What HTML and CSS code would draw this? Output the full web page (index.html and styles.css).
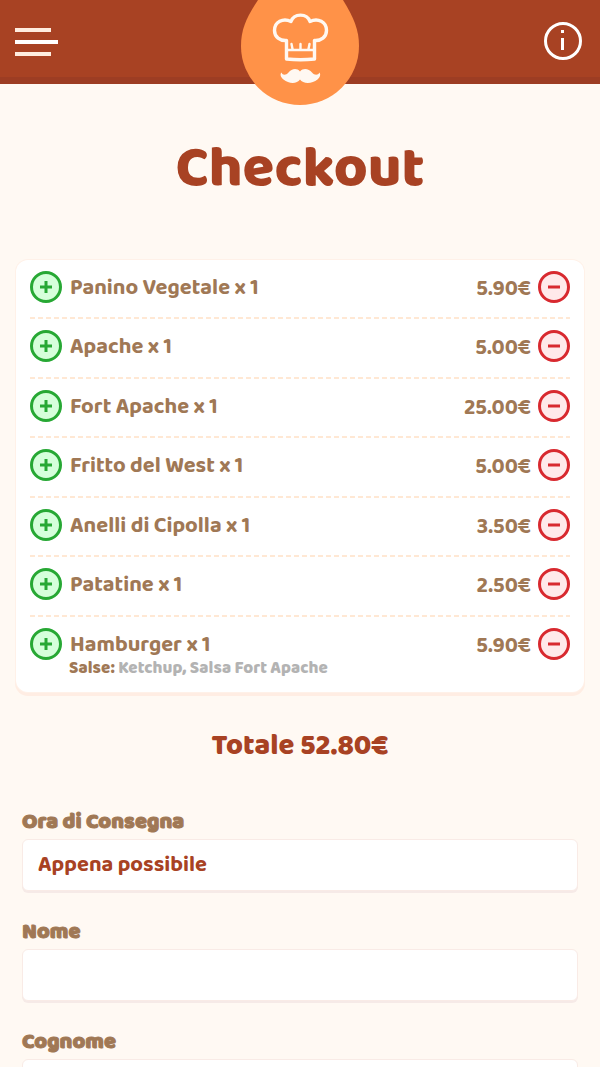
FILE: index.html
```html
<!DOCTYPE html>
<html lang="it">

<head>
	<meta charset="UTF-8">
	<meta name="viewport" content="width=device-width, initial-scale=1">
	<title>Checkout</title>
	<link rel="stylesheet" href="styles.css">
</head>

<body>
	<header class="header">
		<button type="button" class="menu" aria-label="Menu">
			<span class="menu-line"></span>
			<span class="menu-line long"></span>
			<span class="menu-line"></span>
		</button>

		<a href="#" class="logo" aria-label="Home">
			<svg viewBox="0 0 118 105" width="118" height="105">
				<path fill="#ff9248" d="M17 0C5 18 0 30 0 46a59 59 0 0 0 118 0C118 30 113 18 102 0z" />
				<!-- cappello -->
				<g fill="none" stroke="#fff8f2" stroke-width="3.4" stroke-linejoin="round" stroke-linecap="round">
					<path d="M45.500 59V40.500C39 41 33.500 37 33.500 30.500C33.500 22 42 17.500 50 21.500C53 13 66 13 69 21.500C77 17.500 85.500 22 85.500 30.500C85.500 37 80 41 73.500 40.500V59Q59.500 60.500 45.500 59z" />
					<path d="M46 50H73" stroke-width="2.600" />
					<path d="M50.500 44l1 5M59.500 44v5M68.500 44l-1 5" stroke-width="2.400" />
				</g>
				<!-- baffi -->
				<path fill="#fff8f2" d="M59 71.500C55.500 67.500 50.500 69 47.500 72.500C45 75.500 41.500 75.500 40.500 72.500C38.500 74.500 40 77.500 42.500 79.500C48 84 56 84 59 79.500C62 84 71 84 76.500 79.500C79 77.500 80 74.500 78.500 72.500C77 75.500 73.500 75.500 71 72.500C68 69 62.500 67.500 59 71.500z" />
			</svg>
		</a>

		<button type="button" class="info" aria-label="Informazioni">
			<svg viewBox="0 0 38 38" width="38" height="38">
				<circle cx="19" cy="19" r="17.500" fill="none" stroke="#fff" stroke-width="3" />
				<path fill="#fff" d="M17 8h3v3h-3zM17 16h3v12h-3z" />
			</svg>
		</button>
	</header>

	<main>
		<h1 class="title">Checkout</h1>

		<ul class="cart">
			<li class="item">
				<button type="button" class="round add" aria-label="Aggiungi"></button>
				<span class="name">Panino Vegetale x 1</span>
				<span class="price">5.90€</span>
				<button type="button" class="round remove" aria-label="Rimuovi"></button>
			</li>
			<li class="item">
				<button type="button" class="round add" aria-label="Aggiungi"></button>
				<span class="name">Apache x 1</span>
				<span class="price">5.00€</span>
				<button type="button" class="round remove" aria-label="Rimuovi"></button>
			</li>
			<li class="item">
				<button type="button" class="round add" aria-label="Aggiungi"></button>
				<span class="name">Fort Apache x 1</span>
				<span class="price">25.00€</span>
				<button type="button" class="round remove" aria-label="Rimuovi"></button>
			</li>
			<li class="item">
				<button type="button" class="round add" aria-label="Aggiungi"></button>
				<span class="name">Fritto del West x 1</span>
				<span class="price">5.00€</span>
				<button type="button" class="round remove" aria-label="Rimuovi"></button>
			</li>
			<li class="item">
				<button type="button" class="round add" aria-label="Aggiungi"></button>
				<span class="name">Anelli di Cipolla x 1</span>
				<span class="price">3.50€</span>
				<button type="button" class="round remove" aria-label="Rimuovi"></button>
			</li>
			<li class="item">
				<button type="button" class="round add" aria-label="Aggiungi"></button>
				<span class="name">Patatine x 1</span>
				<span class="price">2.50€</span>
				<button type="button" class="round remove" aria-label="Rimuovi"></button>
			</li>
			<li class="item">
				<button type="button" class="round add" aria-label="Aggiungi"></button>
				<span class="name">Hamburger x 1</span>
				<span class="price">5.90€</span>
				<button type="button" class="round remove" aria-label="Rimuovi"></button>
				<p class="extra"><span class="extra-label">Salse:</span> Ketchup, Salsa Fort Apache</p>
			</li>
		</ul>

		<p class="total">Totale 52.80€</p>

		<form class="form">
			<div class="field">
				<label for="ora">Ora di Consegna</label>
				<select id="ora" name="ora">
					<option>Appena possibile</option>
				</select>
			</div>
			<div class="field">
				<label for="nome">Nome</label>
				<input type="text" id="nome" name="nome">
			</div>
			<div class="field">
				<label for="cognome">Cognome</label>
				<input type="text" id="cognome" name="cognome">
			</div>
		</form>
	</main>
</body>

</html>
```
FILE: styles.css
```css
* {
	box-sizing: border-box;
}

body {
	margin: 0;
	background: #fff9f3;
	color: #a07855;
	font-family: "Baloo 2", "Open Sans", "Noto Sans", sans-serif;
	font-weight: 800;
}

button {
	padding: 0;
	border: 0;
	background: none;
	cursor: pointer;
}

/* header */
.header {
	position: relative;
	display: flex;
	align-items: center;
	justify-content: space-between;
	height: 84px;
	padding: 0 18px 0 15px;
	background: #a84223;
	border-bottom: 7px solid #9d3d23;
}

.menu {
	display: flex;
	flex-direction: column;
	gap: 8px;
	margin-top: 7px;
}

.menu-line {
	width: 36px;
	height: 4px;
	background: #ffeddf;
}

.menu-line.long {
	width: 43px;
	background: #fff;
}

.logo {
	position: absolute;
	top: 0;
	left: 50%;
	transform: translateX(-50%);
}

.logo svg,
.info svg {
	display: block;
}

.info {
	margin-top: 5px;
}

.title {
	margin: 50px 0 56px;
	color: #a84223;
	font-size: 58px;
	font-weight: 800;
	line-height: 70px;
	text-align: center;
}

/* carrello */
.cart {
	margin: 0 16px;
	padding: 0 14px 16px;
	list-style: none;
	background: #fff;
	border-radius: 12px;
	box-shadow: 0 0 0 1px #fff1e8, 0 3px 0 1px #ffede3;
}

.item {
	display: grid;
	grid-template-columns: 32px 1fr auto 32px;
	column-gap: 7px;
	align-items: center;
	padding: 9px 0 14px;
	/* linea tratteggiata */
	background: linear-gradient(90deg, #ffe8d4 5px, transparent 5px) left bottom / 8px 2px repeat-x;
	font-size: 22px;
	font-weight: 700;
	line-height: 32px;
}

.item:nth-child(even) {
	padding-bottom: 15px;
}

.item:last-child {
	padding-bottom: 0;
	background: none;
}

.name {
	padding: 2px 0 0 1px;
}

.price {
	padding-top: 4px;
}

.round {
	position: relative;
	width: 32px;
	height: 32px;
	border: 3px solid;
	border-radius: 50%;
}

.add {
	color: #27a834;
	background: #d6ffdb;
}

.remove {
	color: #d8292f;
	background: #ffe9ea;
}

.round::before,
.add::after {
	content: '';
	position: absolute;
	top: 50%;
	left: 50%;
	width: 12px;
	height: 3px;
	background: currentColor;
	transform: translate(-50%, -50%);
}

.add::after {
	width: 3px;
	height: 12px;
}

.extra {
	grid-column: 2 / 4;
	margin: 0;
	color: #b3b3b3;
	font-size: 17px;
	font-weight: 800;
	line-height: 14px;
}

.extra-label {
	color: #a07855;
}

.total {
	margin: 37px 0 46px;
	color: #a84223;
	font-size: 29px;
	line-height: 34px;
	text-align: center;
}

/* form */
.form {
	padding: 0 22px;
}

.field {
	margin-bottom: 28px;
}

.field label {
	display: block;
	margin-bottom: 4px;
	font-size: 22px;
	line-height: 26px;
	-webkit-text-stroke: 1px;
}

.field input,
.field select {
	display: block;
	width: 100%;
	height: 52px;
	padding: 0 15px;
	appearance: none;
	border: 1px solid #f9ebe6;
	border-radius: 6px;
	background: #fff;
	box-shadow: 0 2px 0 #f6eae7;
	color: #a84223;
	font: inherit;
	font-size: 22px;
	font-weight: 700;
}
```
